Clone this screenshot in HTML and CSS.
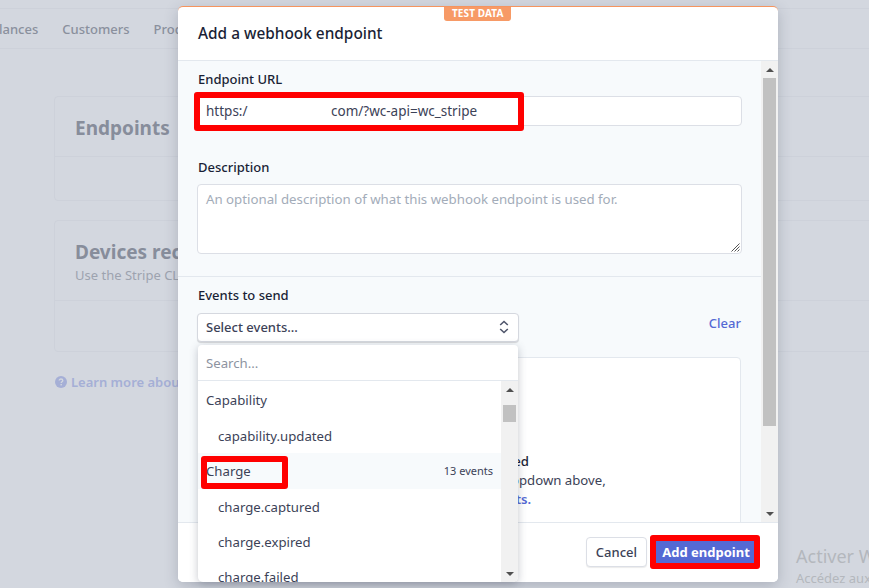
FILE: index.html
```html
<!DOCTYPE html>
<html lang="en">
<head>
<meta charset="utf-8">
<title>Add a webhook endpoint</title>
<link rel="stylesheet" href="styles.css">
</head>
<body>
<div class="page">
  <nav class="topnav">
    <span class="nav-item nav-first">lances</span>
    <span class="nav-item">Customers</span>
    <span class="nav-item">Products</span>
  </nav>
  <section class="card card-endpoints">
    <div class="card-head">
      <h2 class="card-title">Endpoints</h2>
    </div>
  </section>
  <section class="card card-devices">
    <div class="card-head">
      <h2 class="card-title">Devices recently connected</h2>
      <p class="card-sub">Use the Stripe CLI</p>
    </div>
  </section>
  <p class="learn">
    <svg class="learn-icon" viewBox="0 0 12 12" width="12" height="12"><circle cx="6" cy="6" r="6" fill="#a5afd6"/><path d="M4.2 4.6c0-1 .8-1.6 1.8-1.6s1.8.6 1.8 1.5c0 1.3-1.6 1.3-1.6 2.5" fill="none" stroke="#d3d7df" stroke-width="1.3"/><rect x="5.5" y="8" width="1.4" height="1.4" fill="#d3d7df"/></svg>
    <span>Learn more about webhooks</span>
  </p>
  <div class="watermark">
    <div class="wm-title">Activer Windows</div>
    <div class="wm-sub">Accédez aux paramètres</div>
  </div>
</div>

<div class="modal">
  <span class="badge">TEST DATA</span>
  <header class="modal-head">Add a webhook endpoint</header>
  <div class="modal-body">
    <div class="modal-scroll">
      <div class="form-top">
        <label class="label">Endpoint URL</label>
        <div class="input input-url">
          <span class="url-a">https:/</span><span class="url-b">com/?wc-api=wc_stripe</span>
          <span class="mark mark-url"></span>
        </div>
        <label class="label label-desc">Description</label>
        <div class="input textarea">
          An optional description of what this webhook endpoint is used for.
          <svg class="grip" viewBox="0 0 9 9" width="9" height="9"><path d="M0.5 8.5 8.5 0.5M3.5 8.5 8.5 3.5M6.5 8.5 8.5 6.5" stroke="#555" stroke-width="1" fill="none"/></svg>
        </div>
      </div>
      <div class="form-events">
        <label class="label">Events to send</label>
        <div class="events-row">
          <div class="select">
            <span>Select events...</span>
            <svg viewBox="0 0 10 14" width="10" height="14"><path d="M1.2 5 5 1.5 8.8 5M1.2 9 5 12.5 8.8 9" fill="none" stroke="#4f566b" stroke-width="1.6"/></svg>
          </div>
          <a class="clear">Clear</a>
        </div>
        <div class="event-box">
          <p class="eb-title">No events selected</p>
          <p class="eb-text">Search for events with the dropdown above,</p>
          <p class="eb-link">or select all events.</p>
        </div>
      </div>
    </div>
    <div class="scrollbar main-scroll">
      <i class="arrow up"></i>
      <div class="thumb-track"><div class="thumb"></div></div>
      <i class="arrow down"></i>
    </div>
  </div>
  <footer class="modal-foot">
    <button class="btn">Cancel</button>
    <div class="primary-wrap"><button class="btn primary">Add endpoint</button></div>
  </footer>

  <div class="dropdown">
    <div class="search">Search...</div>
    <div class="drop-main">
      <ul class="list">
        <li class="group">Capability</li>
        <li class="event">capability.updated</li>
        <li class="group hover"><span>Charge</span><span class="count">13 events</span><span class="mark mark-charge"></span></li>
        <li class="event">charge.captured</li>
        <li class="event">charge.expired</li>
        <li class="event">charge.failed</li>
      </ul>
      <div class="scrollbar drop-scroll">
        <i class="arrow up"></i>
        <div class="thumb-track"><div class="thumb"></div></div>
        <i class="arrow down"></i>
      </div>
    </div>
  </div>
</div>
</body>
</html>
```
FILE: styles.css
```css
* { box-sizing: border-box; }
html, body { margin: 0; height: 100%; }
body {
  width: 869px; height: 588px; overflow: hidden; position: relative;
  background: #d3d7df;
  font-family: "Noto Sans", "Open Sans", sans-serif;
  font-size: 13.2px; color: #3c4257;
}
.page { width: 869px; height: 588px; position: relative; padding-top: 8px; }
.topnav {
  height: 41px; display: flex; align-items: center; gap: 24px;
  border-top: 1px solid #cdd1da; border-bottom: 1px solid #cdd1da;
  color: #8a909d; font-size: 13px; font-weight: 500; white-space: nowrap; overflow: hidden;
}
.nav-first { margin-left: -1px; }
.card { margin-left: 54px; width: 900px; border: 1px solid #cdd1da; border-radius: 4px; }
.card-head { padding: 0 20px; border-bottom: 1px solid #cdd1da; }
.card-endpoints { height: 105px; margin-top: 47px; }
.card-devices { height: 132px; margin-top: 19px; }
.card-endpoints .card-head { height: 60px; padding-top: 18px; }
.card-devices .card-head { height: 80px; padding-top: 18px; }
.card-title { margin: 0; font-size: 19px; font-weight: 700; color: #878d9b; line-height: 27px; white-space: nowrap; }
.card-sub { margin: 1px 0 0; color: #9da3af; font-size: 13px; line-height: 17px; }
.learn { margin: 21px 0 0 55px; display: flex; gap: 4px; align-items: center; color: #a5afd6; font-size: 13px; font-weight: 600; line-height: 18px; white-space: nowrap; }
.watermark { position: absolute; left: 796px; top: 544px; color: #b4b7bd; white-space: nowrap; }
.wm-title { font-size: 18px; line-height: 24px; }
.wm-sub { font-size: 13px; line-height: 18px; padding-top: 1px; }

.modal {
  position: absolute; left: 178px; top: 6px; width: 600px; height: 576px;
  background: #fff; border-top: 1px solid #f5945f; border-radius: 5px;
  box-shadow: 0 4px 14px rgba(60,66,87,.25);
  display: flex; flex-direction: column;
}
.badge {
  position: absolute; left: 266px; top: 0; height: 14px; padding: 0 8px;
  background: #f79a66; color: #fff; font-size: 10px; font-weight: 700; line-height: 13px;
  border-radius: 0 0 3px 3px; letter-spacing: .1px; white-space: nowrap;
}
.modal-head {
  height: 54px; padding: 15px 20px 0; font-size: 15.4px; font-weight: 500; color: #1a1f36;
  line-height: 24px; border-bottom: 1px solid #e3e8ee; flex: none;
}
.modal-body { flex: 1; min-height: 0; display: flex; background: #f7fafc; overflow: hidden; }
.modal-scroll { flex: 1; min-width: 0; overflow: hidden; }
.form-top { padding: 9px 20px 22px; height: 216px; border-bottom: 1px solid #e3e8ee; }
.label { display: block; color: #1a1f36; font-size: 13px; font-weight: 500; line-height: 18px; }
.input {
  background: #fff; border: 1px solid #dcdfe6; border-radius: 4px; margin: 8px 0 0 -1px; position: relative;
  color: #3c4257; width: 545px;
}
.input-url { height: 30px; line-height: 29px; padding-left: 8px; display: flex; font-size: 13.5px; }
.url-a { width: 125px; }
.label-desc { margin-top: 32px; }
.textarea { height: 70px; padding: 5px 8px; line-height: 18px; color: #a3acb9; font-size: 13.25px; }
.grip { position: absolute; right: 1px; bottom: 1px; }
.mark { position: absolute; border: 6px solid #f00; border-radius: 3px; pointer-events: none; }
.mark-url { left: -4px; top: -5px; width: 330px; height: 39px; }
.form-events { padding: 9px 20px 0; position: relative; }
.events-row { display: flex; justify-content: space-between; align-items: flex-start; margin-top: 9px; }
.select {
  width: 322px; height: 29px; background: #fff; border-radius: 4px; padding: 0 9px 1px 8px; margin-left: -1px;
  border: 1px solid #d5d8df; box-shadow: 0 1px 1px rgba(0,0,0,.14); display: flex; align-items: center; justify-content: space-between;
  font-size: 13px; font-weight: 500;
}
.clear { color: #5469d4; font-size: 13px; font-weight: 500; line-height: 18px; margin: 1px 0 0 0; }
.event-box {
  margin-top: 15px; width: 543px; height: 190px; background: #fff; border: 1px solid #e3e8ee; border-radius: 4px;
  padding: 94px 0 0 0; text-align: center; line-height: 19px;
}
.event-box p { margin: 0; }
.eb-title { color: #1a1f36; font-weight: 500; }
.eb-link { color: #5469d4; font-weight: 600; }

.scrollbar { background: #f1f1f1; display: flex; flex-direction: column; align-items: stretch; flex: none; }
.main-scroll { width: 17px; padding: 0 2px; }
.arrow { display: block; height: 17px; position: relative; flex: none; }
.arrow::after {
  content: ""; position: absolute; left: 50%; top: 50%; margin: -2px 0 0 -4px;
  border-left: 4px solid transparent; border-right: 4px solid transparent;
}
.arrow.up::after { border-bottom: 4px solid #505050; }
.arrow.down::after { border-top: 4px solid #505050; }
.thumb-track { flex: 1; min-height: 0; }
.thumb { background: #c1c1c1; }
.main-scroll .thumb { height: 348px; }

.modal-foot {
  height: 60px; flex: none; background: #fff; border-top: 1px solid #e3e8ee; border-radius: 0 0 5px 5px;
  display: flex; justify-content: flex-end; align-items: center; gap: 3px; padding: 0 18px 1px 0;
}
.btn {
  font: inherit; font-size: 13px; font-weight: 500; height: 30px; border: 1px solid #dcdfe6; border-radius: 4px; background: #fff; color: #3c4257; padding: 0 9px;
  box-shadow: 0 1px 1px rgba(0,0,0,.08);
}
.primary-wrap { border: 6px solid #f00; border-radius: 3px; display: flex; }
.btn.primary { background: #5469d4; color: #fff; border: 0; border-radius: 0; height: 22px; width: 98px; padding: 0 0 0 2px; box-shadow: none; font-weight: 700; }

.dropdown {
  position: absolute; left: 20px; top: 338px; width: 320px; height: 237px; background: #fff;
  border-radius: 4px 4px 5px 5px; box-shadow: 0 2px 8px rgba(60,66,87,.3); overflow: hidden; display: flex; flex-direction: column;
}
.search { height: 36px; padding: 0 8px; line-height: 36px; color: #8d939f; border-bottom: 1px solid #e3e8ee; flex: none; }
.drop-main { flex: 1; min-height: 0; display: flex; }
.list { list-style: none; margin: 0; padding: 1px 0 0; flex: 1; min-width: 0; overflow: hidden; }
.list li { height: 36px; line-height: 36px; position: relative; white-space: nowrap; }
.group { padding: 0 8px; color: #3c4257; display: flex; justify-content: space-between; }
.list .group.hover { background: #f7fafc; padding-right: 8px; }
.event { padding-left: 20px; }
.list li.event { height: 35px; line-height: 36px; }
.count { font-size: 11px; }
.mark-charge { left: 3px; top: 3px; width: 87px; height: 33px; }
.drop-scroll { width: 17px; }
.drop-scroll .thumb { height: 17px; margin: 7px 2px 0; }
```
